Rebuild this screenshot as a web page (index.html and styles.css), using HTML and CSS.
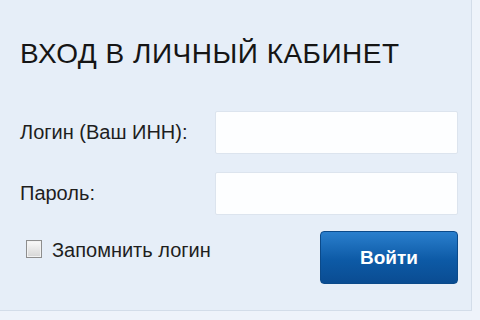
FILE: index.html
```html
<!DOCTYPE html>
<html lang="ru">
<head>
<meta charset="utf-8">
<title>Вход в личный кабинет</title>
<link rel="stylesheet" href="styles.css">
</head>
<body>
<div class="panel">
  <h1 class="title">ВХОД В ЛИЧНЫЙ КАБИНЕТ</h1>
  <form class="form">
    <div class="row">
      <label class="label" for="login">Логин (Ваш ИНН):</label>
      <input class="field" id="login" type="text">
    </div>
    <div class="row">
      <label class="label" for="pass">Пароль:</label>
      <input class="field" id="pass" type="password">
    </div>
    <div class="actions">
      <label class="remember"><span class="check"></span>Запомнить логин</label>
      <button class="btn" type="button">Войти</button>
    </div>
  </form>
</div>
</body>
</html>
```
FILE: styles.css
```css
html, body {
  margin: 0;
  padding: 0;
}
body {
  width: 480px;
  height: 320px;
  background: #eef3fa;
  font-family: "Liberation Sans", Arial, sans-serif;
  color: #1a1a1a;
  overflow: hidden;
}
.panel {
  width: 472px;
  height: 311px;
  box-sizing: border-box;
  background: #e6eef8;
  border-right: 1px solid #d3dde9;
  border-bottom: 1px solid #d3dde9;
  padding: 38px 0 0 20px;
}
.title {
  margin: 0;
  font-size: 28px;
  line-height: 32px;
  font-weight: normal;
  color: #151515;
  letter-spacing: 0.5px;
}
.form {
  width: 438px;
  margin-top: 41px;
  display: flex;
  flex-direction: column;
  gap: 18px;
}
.row {
  display: flex;
  align-items: center;
  justify-content: space-between;
}
.label {
  font-size: 20px;
  line-height: 23px;
  color: #1e1e1e;
}
.label-narrow {
  letter-spacing: -0.2px;
}
.field {
  width: 243px;
  height: 43px;
  box-sizing: border-box;
  border: 1px solid #dce4ee;
  border-radius: 2px;
  background: #fdfeff;
  margin: 0;
}
.actions {
  display: flex;
  justify-content: space-between;
  align-items: flex-start;
  margin-top: -2px;
}
.remember {
  display: flex;
  align-items: center;
  gap: 10px;
  padding: 8px 0 0 6px;
  font-size: 20px;
  line-height: 23px;
  color: #1e1e1e;
}
.check {
  width: 16px;
  height: 18px;
  box-sizing: border-box;
  border: 1px solid #8e8e8e;
  background: linear-gradient(#fafafa, #d6d6d6);
  box-shadow: inset 0 0 0 1px #f2f2f2;
  margin-top: -4px;
}
.btn {
  width: 138px;
  height: 53px;
  border: 1px solid #0b4a8a;
  border-radius: 4px;
  background: linear-gradient(#2a7fcd, #0d5aa6 55%, #0a4c92);
  color: #ffffff;
  font-family: "Liberation Sans", Arial, sans-serif;
  font-size: 19px;
  font-weight: bold;
  padding: 0;
}
```
